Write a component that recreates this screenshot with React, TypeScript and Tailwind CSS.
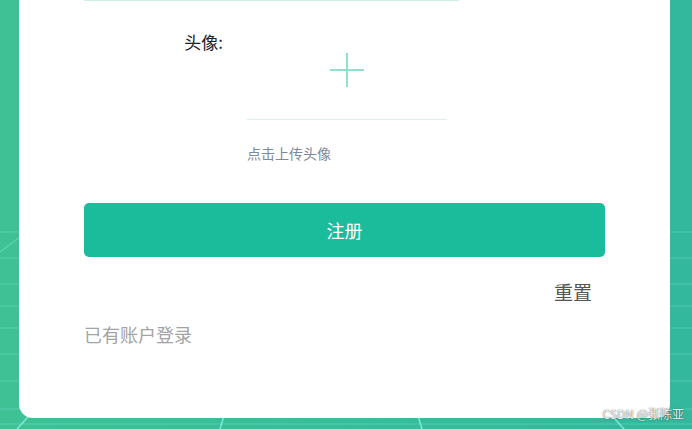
const GridBackdrop = () => {
  const rows = [232, 258, 284, 306, 328, 354, 381, 409, 424];
  const rays = [17, 220, 422, 624];
  return (
    <svg className="absolute inset-0" width="692" height="429" viewBox="0 0 692 429">
      {rows.map((y) => (
        <line key={y} x1="0" y1={y} x2="692" y2={y} stroke="#8ff0e6" strokeOpacity="0.22" strokeWidth="1.5" />
      ))}
      <line x1="0" y1="252" x2="40" y2="222" stroke="#8ff0e6" strokeOpacity="0.35" strokeWidth="1.5" />
      {rays.map((x) => (
        <line key={x} x1="320" y1="96" x2={x} y2="429" stroke="#8ff8f0" strokeOpacity="0.75" strokeWidth="1.5" />
      ))}
    </svg>
  );
};

const PlusIcon = () => (
  <svg width="34" height="34" viewBox="0 0 34 34">
    <line x1="0" y1="17" x2="34" y2="17" stroke="#8fe0cd" strokeWidth="2" />
    <line x1="17" y1="0" x2="17" y2="34" stroke="#8fe0cd" strokeWidth="2" />
  </svg>
);

const App = () => {
  return (
    <div className="relative h-[429px] w-[692px] overflow-hidden bg-gradient-to-r from-[#3fc195] to-[#33b89d] font-['Noto_Sans_CJK_SC','Liberation_Sans',sans-serif]">
      <GridBackdrop />

      <div className="relative ml-[19px] h-[418px] w-[651px] rounded-b-[14px] bg-white px-[65px]">
        {/* bottom border of the field above */}
        <div className="h-px w-[375px] bg-[#d0efe8]" />

        <div className="mt-[19px] flex">
          <label className="w-[163px] pr-[24px] pt-[9px] text-right text-[17px] leading-[26px] text-[#222]">
            头像:
          </label>
          <div className="flex h-[100px] w-[200px] cursor-pointer items-center justify-center border-b border-[#dcefeb]">
            <PlusIcon />
          </div>
        </div>

        <p className="ml-[163px] mt-[23px] text-[14px] leading-[20px] text-[#7d8898]">点击上传头像</p>

        <button className="mt-[40px] flex h-[54px] w-full items-center justify-center rounded-[5px] bg-[#1abc9c] text-[18px] text-white">
          注册
        </button>

        <div className="mt-[22px] flex justify-end pr-[13px]">
          <span className="text-[19px] leading-[26px] text-[#555]">重置</span>
        </div>

        <p className="mt-[16px] text-[18px] leading-[26px] text-[#a3a3a3]">已有账户登录</p>
      </div>

      <span className="absolute bottom-[7px] right-[8px] text-[12px] leading-[16px] text-[#f2f2f2] [text-shadow:0_0_1px_rgba(0,0,0,0.6),0_0_2px_rgba(0,0,0,0.3)]">
        CSDN @张陈亚
      </span>
    </div>
  );
};

export default App;
